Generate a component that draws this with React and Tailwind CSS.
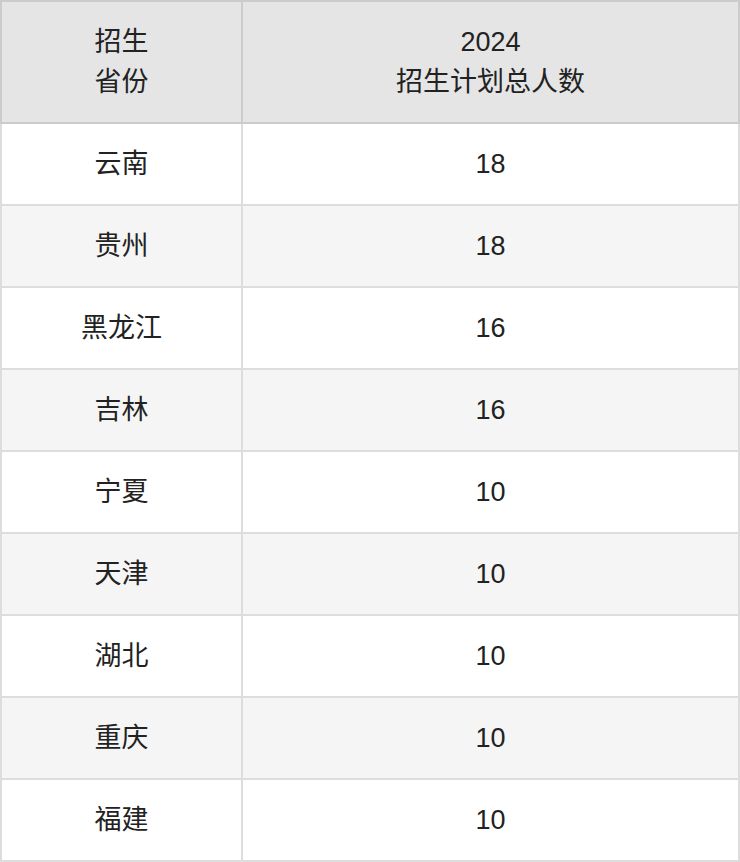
const rows = [
  ['云南', '18'],
  ['贵州', '18'],
  ['黑龙江', '16'],
  ['吉林', '16'],
  ['宁夏', '10'],
  ['天津', '10'],
  ['湖北', '10'],
  ['重庆', '10'],
  ['福建', '10'],
];

export default function App() {
  return (
    <div className="w-[740px] bg-white text-[#222] font-['Liberation_Sans','Noto_Sans_CJK_SC',sans-serif] text-[27px]">
      <table className="w-[740px] border-collapse table-fixed">
        <colgroup>
          <col className="w-[241px]" />
          <col />
        </colgroup>
        <thead>
          <tr className="bg-[#e5e5e5]">
            <th className="h-[122px] border-2 border-[#ccc] font-normal leading-[40px] text-center">
              招生<br />省份
            </th>
            <th className="h-[122px] border-2 border-[#ccc] font-normal leading-[40px] text-center">
              2024<br />招生计划总人数
            </th>
          </tr>
        </thead>
        <tbody>
          {rows.map(([prov, num], i) => (
            <tr key={prov} className={i % 2 === 1 ? 'bg-[#f5f5f5]' : 'bg-white'}>
              <td className="h-[82px] border-2 border-[#ddd] text-center">{prov}</td>
              <td className="h-[82px] border-2 border-[#ddd] text-center">{num}</td>
            </tr>
          ))}
        </tbody>
      </table>
    </div>
  );
}
